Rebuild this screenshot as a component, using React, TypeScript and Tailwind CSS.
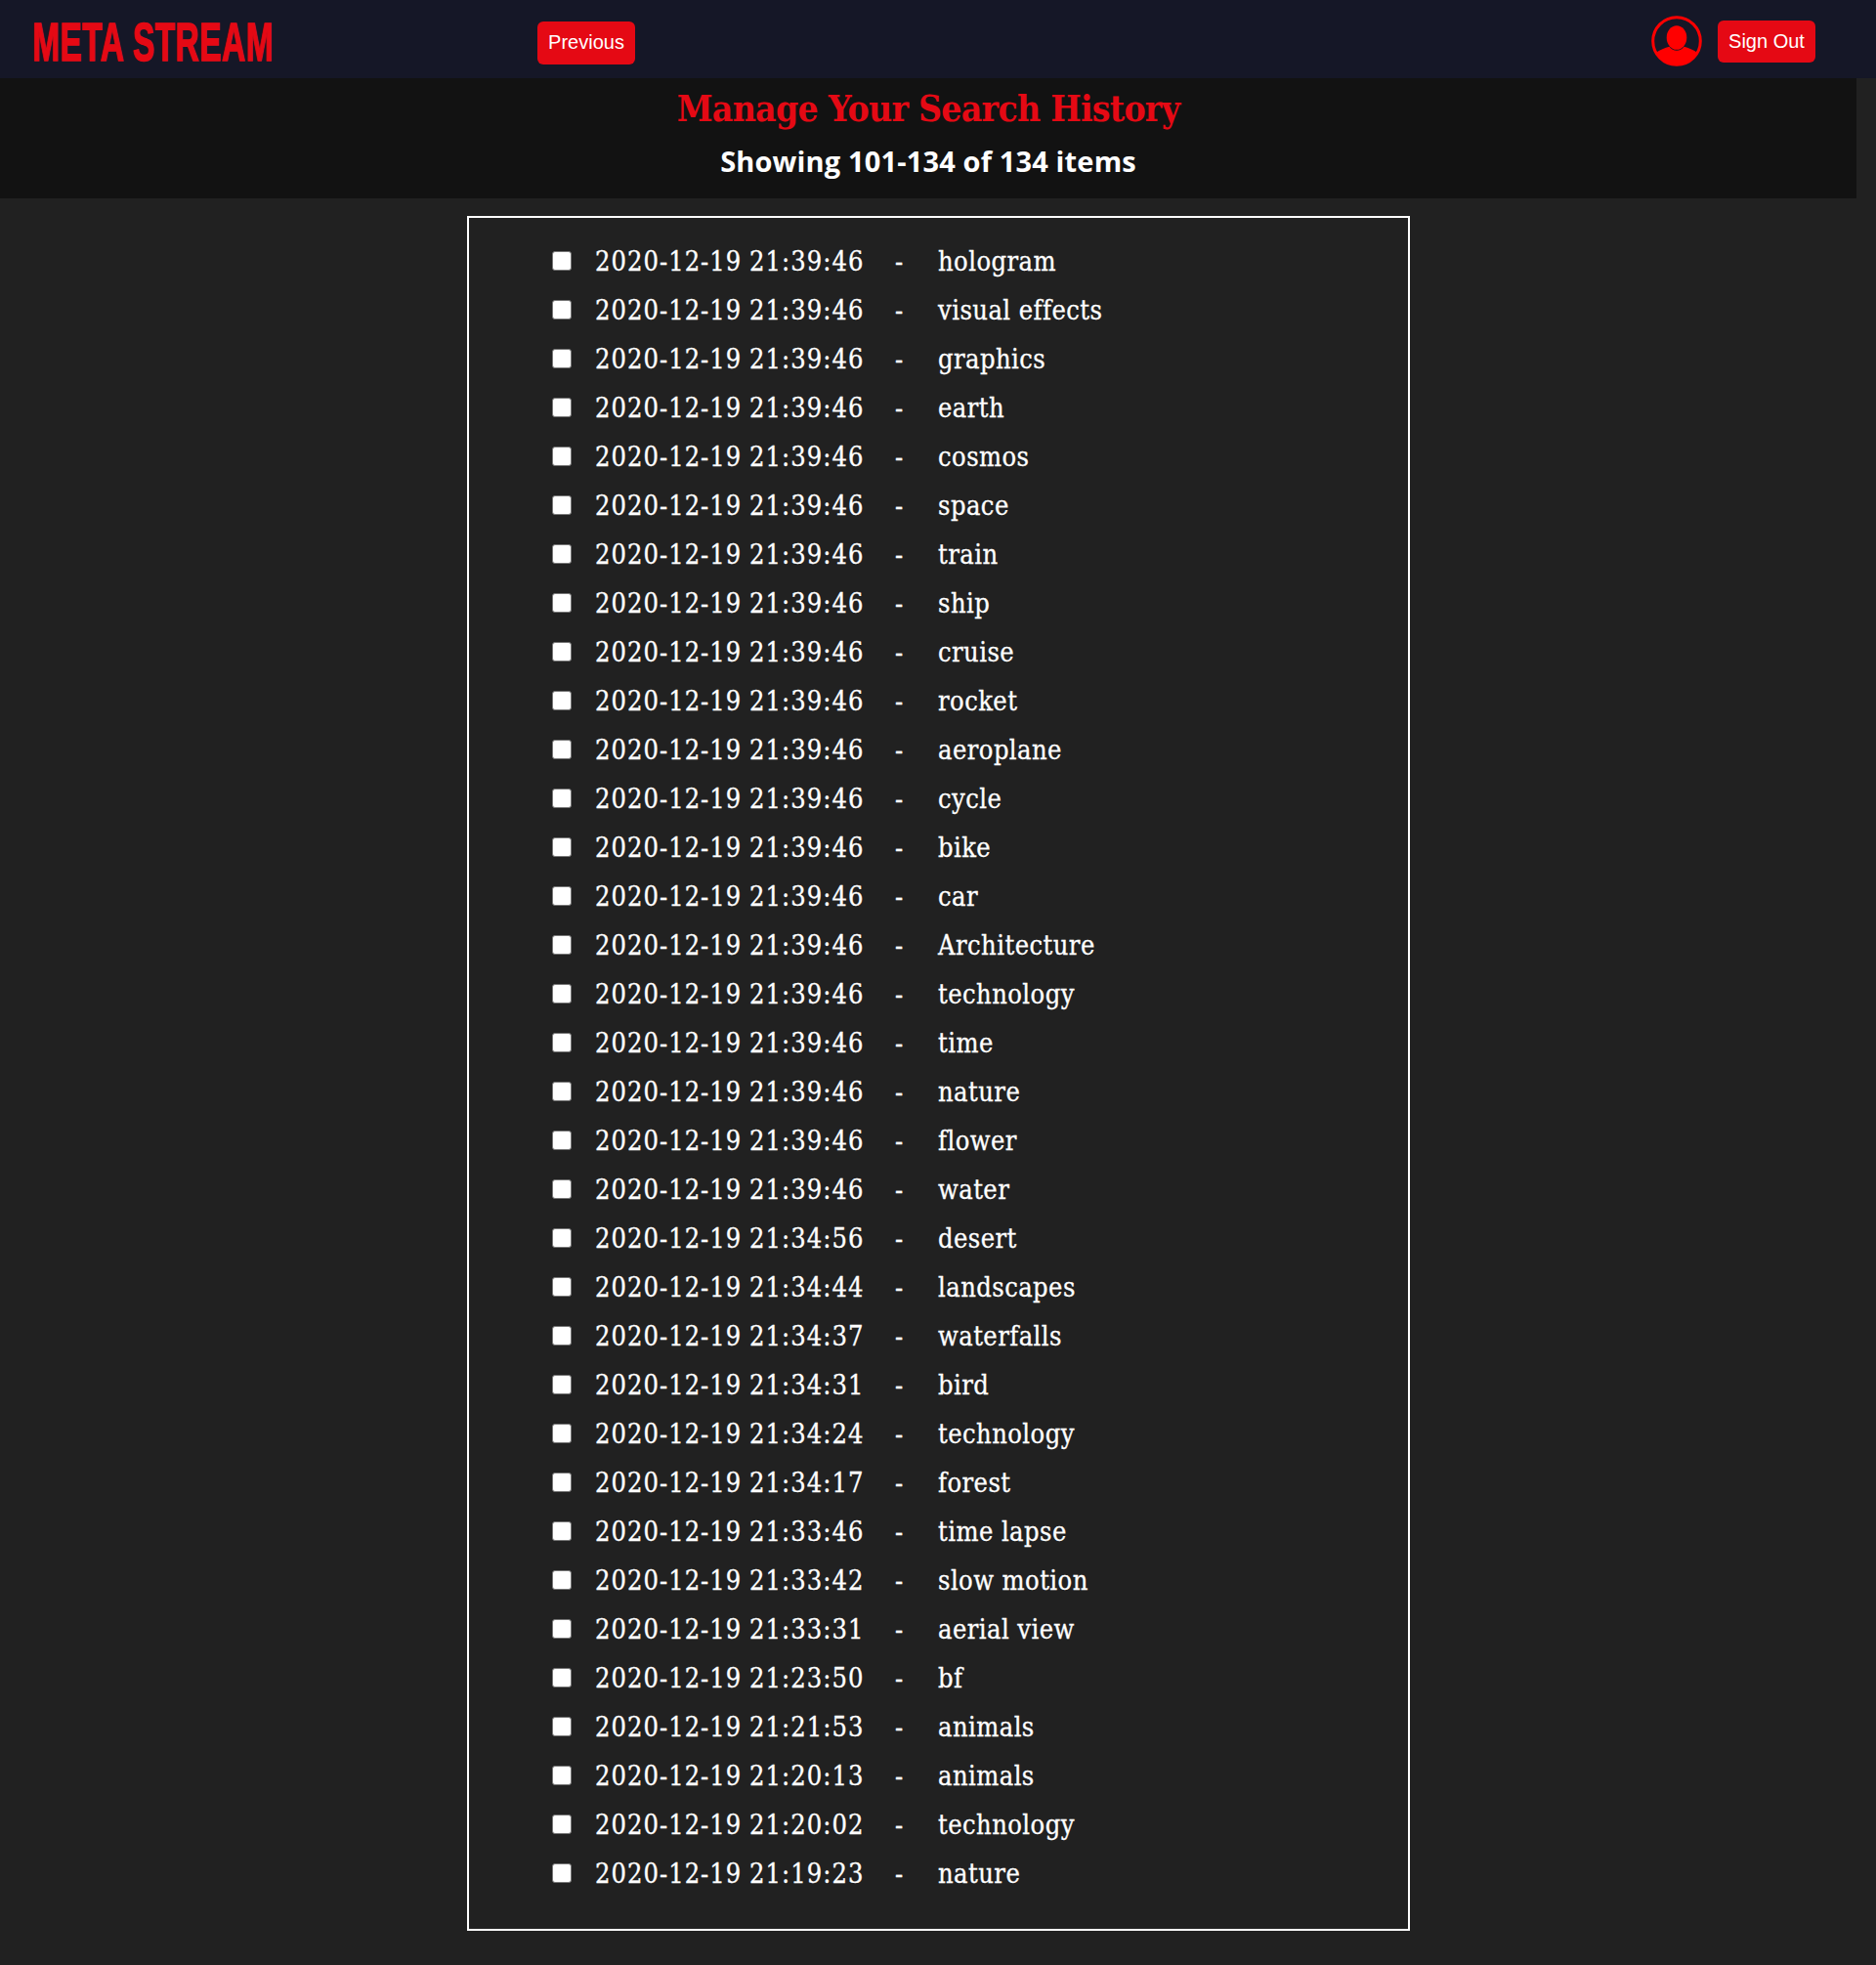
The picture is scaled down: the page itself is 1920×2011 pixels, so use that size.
type Entry = { time: string; term: string };

const sameTime = [
  'hologram', 'visual effects', 'graphics', 'earth', 'cosmos', 'space', 'train', 'ship', 'cruise', 'rocket',
  'aeroplane', 'cycle', 'bike', 'car', 'Architecture', 'technology', 'time', 'nature', 'flower', 'water',
];

const entries: Entry[] = [
  ...sameTime.map((term) => ({ time: '21:39:46', term })),
  { time: '21:34:56', term: 'desert' },
  { time: '21:34:44', term: 'landscapes' },
  { time: '21:34:37', term: 'waterfalls' },
  { time: '21:34:31', term: 'bird' },
  { time: '21:34:24', term: 'technology' },
  { time: '21:34:17', term: 'forest' },
  { time: '21:33:46', term: 'time lapse' },
  { time: '21:33:42', term: 'slow motion' },
  { time: '21:33:31', term: 'aerial view' },
  { time: '21:23:50', term: 'bf' },
  { time: '21:21:53', term: 'animals' },
  { time: '21:20:13', term: 'animals' },
  { time: '21:20:02', term: 'technology' },
  { time: '21:19:23', term: 'nature' },
];

function Logo() {
  return (
    <svg width="280" height="80" viewBox="0 0 280 80" className="shrink-0 overflow-visible">
      <text
        x="0"
        y="0"
        transform="translate(33 62) scale(0.76 1.28)"
        textLength="324"
        lengthAdjust="spacing"
        fill="#e50914"
        stroke="#e50914"
        strokeWidth="1.1"
        fontFamily="'Liberation Sans', sans-serif"
        fontWeight="700"
        fontSize="44"
      >
        META STREAM
      </text>
    </svg>
  );
}

function Avatar() {
  return (
    <svg width="52" height="52" viewBox="0 0 52 52" className="shrink-0">
      <defs>
        <clipPath id="disc">
          <circle cx="26" cy="26" r="25" />
        </clipPath>
      </defs>
      <circle cx="26" cy="26" r="24.3" fill="none" stroke="#f00" strokeWidth="3" />
      <ellipse cx="26" cy="22.5" rx="10.3" ry="12.3" fill="#f00" />
      <path
        clipPath="url(#disc)"
        d="M4 38.5C9 34.5 14 33 18.5 31.7C22 37 30 37 33.5 31.7C38 33 43 34.5 48 38.5V52H4Z"
        fill="#f00"
      />
    </svg>
  );
}

export default function App() {
  return (
    <div className="min-h-[2011px] w-[1920px] bg-[#212121] text-white">
      <header className="flex h-20 bg-[#151727] font-['Liberation_Sans',sans-serif] text-[20px]">
        <Logo />
        <button className="mt-[22px] ml-[270px] h-11 w-[100px] rounded-md bg-[#e50914] pb-[3px]">Previous</button>
        <div className="mt-4 ml-auto mr-[62px] flex">
          <Avatar />
          <button className="mt-[5px] ml-4 h-[43px] w-[100px] rounded-md bg-[#e50914] pb-0.5">Sign Out</button>
        </div>
      </header>

      <section className="flex h-[123px] w-[1900px] flex-col items-center bg-[#121212]">
        <h1 className="mt-[7px] font-['DejaVu_Serif_Condensed','DejaVu_Serif',serif] text-[37px] leading-[48px] font-bold tracking-[-0.75px] whitespace-nowrap text-[#e50914] [font-stretch:condensed]">
          Manage Your Search History
        </h1>
        <h2 className="mt-1.5 font-['Open_Sans','Noto_Sans',sans-serif] text-[29px] leading-[48px] font-bold tracking-[0.15px] whitespace-nowrap">
          Showing 101-134 of 134 items
        </h2>
      </section>

      <main className="mt-[18px] ml-[478px] h-[1755px] w-[965px] border-2 border-white pt-[19px] pl-[85px]">
        <ul className="font-['DejaVu_Serif_Condensed','DejaVu_Serif',serif] text-[27px] [font-stretch:condensed] [-webkit-text-stroke:0.3px_white]">
          {entries.map((entry, i) => (
            <li key={i} className="flex h-[50px] items-center whitespace-nowrap">
              <input
                type="checkbox"
                className="size-5 appearance-none rounded-[3px] border border-[#767676] bg-white"
              />
              <span className="ml-6 w-[307px] pt-0.5 tracking-[1.03px] [word-spacing:-1px]">
                2020-12-19 {entry.time}
              </span>
              <span className="w-11 pt-0.5">-</span>
              <span className="pt-0.5 tracking-[0.45px]">{entry.term}</span>
            </li>
          ))}
        </ul>
      </main>
    </div>
  );
}
